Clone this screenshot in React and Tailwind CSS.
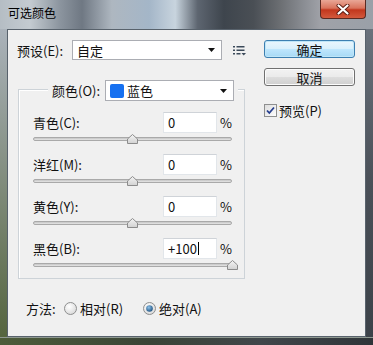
import React from 'react';

const Arrow = () => (
  <svg width="7" height="4" viewBox="0 0 7 4" className="shrink-0">
    <polygon points="0,0 7,0 3.5,4" fill="#111" />
  </svg>
);

const Dropdown = ({ className, children }) => (
  <div className={`h-[21px] border border-[#abadb3] bg-white flex items-center pl-[4px] pr-[6px] ${className}`}>
    <div className="flex-1 flex items-center gap-[3px]">{children}</div>
    <Arrow />
  </div>
);

const MenuIcon = () => (
  <svg width="13" height="11" viewBox="0 0 13 11">
    <rect x="0" y="1" width="2" height="1.5" fill="#3b4a5a" />
    <rect x="0" y="4.5" width="2" height="1.5" fill="#3b4a5a" />
    <rect x="0" y="8" width="2" height="1.5" fill="#3b4a5a" />
    <rect x="3.5" y="1" width="8" height="1.5" fill="#3b4a5a" />
    <rect x="3.5" y="4.5" width="8" height="1.5" fill="#3b4a5a" />
    <rect x="3.5" y="8" width="4" height="1.5" fill="#3b4a5a" />
    <polygon points="8.5,8 13,8 10.75,10.5" fill="#3b4a5a" />
  </svg>
);

const Thumb = () => (
  <svg width="11" height="10" viewBox="0 0 11 10">
    <defs>
      <linearGradient id="tg" x1="0" y1="0" x2="0" y2="1">
        <stop offset="0" stopColor="#f4f4f4" />
        <stop offset="1" stopColor="#d2d2d2" />
      </linearGradient>
    </defs>
    <path d="M5.5 0.5 L10.5 5 L10.5 9.5 L0.5 9.5 L0.5 5 Z" fill="url(#tg)" stroke="#8c8c8c" />
  </svg>
);

const SliderRow = ({ label, value, caret, last }) => {
  const num = parseInt(value, 10) || 0;
  const center = ((num + 100) / 200) * 199;
  return (
    <div className="flex flex-col">
      <div className="h-[21px] flex items-center">
        <span className="flex-1">{label}</span>
        <div className="w-[54px] h-[21px] border border-[#e2e6ea] border-t-[#cfd3d8] bg-white flex items-center pl-[4px]">
          <span>{value}</span>
          {caret && <span className="w-px h-[13px] bg-black ml-[1px]" />}
        </div>
        <span className="w-[15px] text-right">%</span>
      </div>
      <div className={`relative ${last ? 'h-[19px]' : 'h-[21px]'}`}>
        <div className="mt-[4px] h-[4px] rounded-full border border-[#a9a9a9] bg-[linear-gradient(to_bottom,#c4c4c4,#e6e6e6)]" />
        <div className="absolute top-[1px]" style={{ left: center - 5.5 }}>
          <Thumb />
        </div>
      </div>
    </div>
  );
};

const Radio = ({ checked }) => (
  <svg width="13" height="13" viewBox="0 0 13 13" className="shrink-0">
    <defs>
      <radialGradient id={checked ? 'rc' : 'ru'} cx="0.4" cy="0.35" r="0.7">
        <stop offset="0" stopColor="#ffffff" />
        <stop offset="1" stopColor="#d8d8d8" />
      </radialGradient>
      <radialGradient id="dot" cx="0.4" cy="0.35" r="0.7">
        <stop offset="0" stopColor="#8ec2ea" />
        <stop offset="1" stopColor="#1b4f7e" />
      </radialGradient>
    </defs>
    <circle cx="6.5" cy="6.5" r="6" fill={`url(#${checked ? 'rc' : 'ru'})`} stroke="#8e8f8f" />
    {checked && <circle cx="6.5" cy="6.5" r="3.3" fill="url(#dot)" />}
  </svg>
);

const Checkbox = () => (
  <svg width="13" height="13" viewBox="0 0 13 13" className="shrink-0">
    <defs>
      <linearGradient id="cb" x1="0" y1="0" x2="1" y2="1">
        <stop offset="0" stopColor="#dcdcdc" />
        <stop offset="1" stopColor="#ffffff" />
      </linearGradient>
    </defs>
    <rect x="0.5" y="0.5" width="12" height="12" fill="url(#cb)" stroke="#8e8f8f" />
    <path d="M3 6.5 L5.3 9 L10 3.5" fill="none" stroke="#253e8e" strokeWidth="1.8" />
  </svg>
);

export default function App() {
  return (
    <div className="w-[373px] h-[345px] flex flex-col font-['Noto_Sans_CJK_SC','Noto_Sans',sans-serif] text-[13px] leading-none text-[#111] overflow-hidden">
      {/* Title bar */}
      <div className="h-[29px] shrink-0 flex items-start bg-[linear-gradient(to_right,#b5bdc4_0%,#c4cbd1_8%,#8c959f_16%,#6f7883_22%,#aeb7c0_30%,#a4b6c8_40%,#c8d4de_47%,#5d6570_53%,#3e454d_60%,#4a4f55_68%,#6b6e72_75%,#8d9096_82%,#a0a2a8_86%,#9aa0a8_100%)]">
        <span className="ml-[8px] mt-[7px] text-[12px] text-black flex-1">可选颜色</span>
        <div className="mr-[7px] w-[46px] h-[19px] rounded-b-[4px] border border-t-0 border-[#5a2a22] bg-[linear-gradient(to_bottom,#e9a796,#d9735c_45%,#c2371d_55%,#d3593c)] flex items-center justify-center">
          <svg width="14" height="11" viewBox="0 0 14 11">
            <path d="M2.5 1.5 L11.5 9.5 M11.5 1.5 L2.5 9.5" stroke="#5a1a10" strokeWidth="4" strokeLinecap="round" />
            <path d="M2.5 1.5 L11.5 9.5 M11.5 1.5 L2.5 9.5" stroke="#ffffff" strokeWidth="2.2" strokeLinecap="round" />
          </svg>
        </div>
      </div>

      <div className="flex h-[308px] shrink-0">
        <div className="w-[7px] bg-[linear-gradient(to_bottom,#aab2ba,#7c8876_55%,#55653f)]" />

        {/* Client */}
        <div className="w-[359px] border border-[#58626c] bg-[#f0f0f0] flex">
          <div className="w-[256px] shrink-0 pl-[9px] pt-[10px] flex flex-col">
            <div className="h-[20px] flex items-center">
              <span className="w-[55px]">预设(E):</span>
              <Dropdown className="w-[150px] !h-[20px]">
                <span>自定</span>
              </Dropdown>
              <div className="ml-[11px] flex items-center">
                <MenuIcon />
              </div>
            </div>

            <div className="ml-[1px] mt-[29px] w-[227px] border border-[#cdd3d8] shadow-[inset_1px_1px_0_#ffffff] flex flex-col">
              <div className="-mt-[10px] ml-[29px] w-[190px] pl-[4px] bg-[#f0f0f0] flex items-center">
                <span className="w-[53px]">颜色(O):</span>
                <Dropdown className="w-[129px]">
                  <span className="w-[14px] h-[14px] rounded-[2px] bg-[#1670f0]" />
                  <span>蓝色</span>
                </Dropdown>
              </div>
              <div className="mt-[11px] pl-[14px] pr-[12px] flex flex-col">
                <SliderRow label="青色(C):" value="0" />
                <SliderRow label="洋红(M):" value="0" />
                <SliderRow label="黄色(Y):" value="0" />
                <SliderRow label="黑色(B):" value="+100" caret last />
              </div>
            </div>

            <div className="mt-[21px] ml-[9px] h-[16px] flex items-center">
              <span className="w-[38px]">方法:</span>
              <Radio />
              <span className="ml-[3px]">相对(R)</span>
              <span className="ml-[20px] flex items-center">
                <Radio checked />
                <span className="ml-[3px]">绝对(A)</span>
              </span>
            </div>
          </div>

          <div className="pt-[10px] flex flex-col">
            <div className="w-[91px] h-[18px] rounded-[3px] border border-[#3c7fb1] shadow-[inset_0_0_0_1px_#bfe6f8] bg-[linear-gradient(to_bottom,#eaf6fd_0%,#d9f0fc_48%,#bee6fd_52%,#a7d9f5_100%)] flex items-center justify-center">
              确定
            </div>
            <div className="mt-[10px] w-[91px] h-[18px] rounded-[3px] border border-[#707070] shadow-[inset_0_0_0_1px_#fcfcfc] bg-[linear-gradient(to_bottom,#f2f2f2_0%,#ebebeb_48%,#dddddd_52%,#cfcfcf_100%)] flex items-center justify-center">
              取消
            </div>
            <div className="mt-[18px] flex items-center">
              <Checkbox />
              <span className="ml-[2px]">预览(P)</span>
            </div>
          </div>
        </div>

        <div className="w-[7px] bg-[linear-gradient(to_bottom,#6a727c,#4a5058_50%,#3c4249)]" />
      </div>

      <div className="flex-1 bg-[linear-gradient(to_right,#4d5c3a,#3a4436_40%,#40464a_70%,#2f3438)] border-t border-[#8e9890]" />
    </div>
  );
}
